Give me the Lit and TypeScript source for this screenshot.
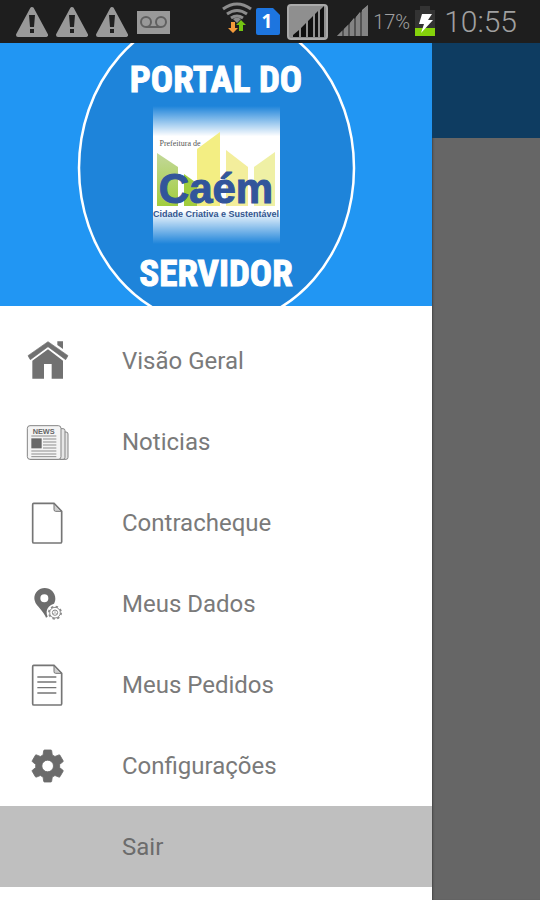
import { LitElement, html, svg, css, type SVGTemplateResult } from "lit";
import { customElement, property } from "lit/decorators.js";
import { classMap } from "lit/directives/class-map.js";

const gear =
  "M19.14 12.94c.04-.3.06-.61.06-.94 0-.32-.02-.64-.07-.94l2.03-1.58a.49.49 0 0 0 .12-.61l-1.92-3.32a.488.488 0 0 0-.59-.22l-2.39.96c-.5-.38-1.03-.7-1.62-.94l-.36-2.54a.484.484 0 0 0-.48-.41h-3.84c-.24 0-.43.17-.47.41l-.36 2.54c-.59.24-1.13.57-1.62.94l-2.39-.96c-.22-.08-.47 0-.59.22L2.74 8.87c-.12.21-.08.47.12.61l2.03 1.58c-.05.3-.09.63-.09.94s.02.64.07.94l-2.03 1.58a.49.49 0 0 0-.12.61l1.92 3.32c.12.22.37.29.59.22l2.39-.96c.5.38 1.03.7 1.62.94l.36 2.54c.05.24.24.41.48.41h3.84c.24 0 .44-.17.47-.41l.36-2.54c.59-.24 1.13-.56 1.62-.94l2.39.96c.22.08.47 0 .59-.22l1.92-3.32c.12-.22.07-.47-.12-.61l-2.01-1.58zM12 15.5a3.5 3.5 0 1 1 0-7 3.5 3.5 0 0 1 0 7z";

const sheet = svg`
  <path d="M29 13H90L113 37V128Q113 132 109 132H30Q26 132 26 128V17Q26 13 29 13Z" fill="#fff" stroke="#757575" stroke-width="5"/>
  <path d="M90 14V32Q90 37 95 37H112Z" fill="#d0d0d0" stroke="#757575" stroke-width="3"/>`;

const icons: Record<string, SVGTemplateResult> = {
  home: svg`<g fill="#717171">
    <path d="M72 14L132 56L125 68L72 29L19 68L12 56Z" stroke="#717171" stroke-width="2" stroke-linejoin="round"/>
    <path d="M100 13H117V36L100 24Z"/>
    <path d="M25 71L72 37L117 71V125H83V81H60V125H25Z"/></g>`,
  news: svg`<g fill="#e6e6e6" stroke="#858585" stroke-width="3">
    <path d="M112 42H126Q132 42 132 48V118Q132 124 126 124H20V42Z"/>
    <path d="M104 32H117Q123 32 123 38V118Q123 124 117 124H20V32Z"/>
    <rect x="10" y="23" width="101" height="101" rx="8" fill="#f4f4f4"/></g>
    <text x="59" y="47" text-anchor="middle" class="news">NEWS</text>
    <rect x="22" y="61" width="31" height="30" fill="#686868"/>
    <path d="M22 54H97M57 63H97M57 72H97M57 81H97M57 90H97M22 99H97M22 108H97M22 116H97" stroke="#8d8d8d" stroke-width="3"/>`,
  sheet,
  place: svg`<path fill-rule="evenodd" fill="#6d6d6d" d="M62 24C80 24 94 38 94 56C94 62 92 67 90 71Q70 78 68 94Q67 104 71 110L66 113Q62 102 44 81Q31 68 31 55C31 38 45 24 62 24ZM61 43A12 12 0 1 0 61 67A12 12 0 1 0 61 43Z"/>
    <circle cx="93" cy="98" r="18" fill="none" stroke="#8a8a8a" stroke-width="6" stroke-dasharray="7 7.1"/>
    <circle cx="93" cy="98" r="16" fill="#fff" stroke="#8a8a8a" stroke-width="3"/>
    <circle cx="93" cy="98" r="8" fill="none" stroke="#8a8a8a" stroke-width="3"/>
    <path d="M93 90V98L86 103M93 98L100 103" stroke="#999" stroke-width="2" fill="none"/>`,
  lines: svg`${sheet}<path d="M40 48H97M40 63H97M40 80H97M40 96H97" stroke="#757575" stroke-width="4"/>`,
  gear: svg`<path transform="translate(11 12) scale(5)" fill="#6b6b6b" stroke="#6b6b6b" stroke-width=".5" d="${gear}"/>`,
};

@customElement("status-bar")
class StatusBar extends LitElement {
  static styles = css`
    :host { display: flex; align-items: center; justify-content: space-between; height: 43px; padding: 0 23px 0 16px; background: #1e1e1e; color: #a0a0a0; font-family: Roboto, sans-serif; font-weight: 300; }
    .group { display: flex; align-items: center; }
    .left { gap: 8px; }
    .right { gap: 4px; }
    svg { display: block; flex: none; }
    .percent { font-size: 20px; }
    .clock { font-size: 30px; margin-left: 4px; }
    .sim { font: bold 19px "Open Sans", sans-serif; fill: #fff; }
  `;

  private warning() {
    return html`<svg width="32" height="43" viewBox="0 0 32 43" aria-hidden="true">
      <path d="M16 9L30 35H2Z" fill="#999" stroke="#999" stroke-width="4" stroke-linejoin="round"/>
      <path d="M13 15H19L18 27H14ZM14 29H18V33H14Z" fill="#202020"/></svg>`;
  }

  render() {
    return html`
      <div class="group left">
        ${[0, 1, 2].map(() => this.warning())}
        <svg width="34" height="43" viewBox="0 0 34 43" aria-hidden="true">
          <rect x="1" y="11" width="33" height="23" fill="#999"/>
          <g fill="none" stroke="#606060" stroke-width="2"><circle cx="10" cy="22" r="5"/><circle cx="25" cy="22" r="5"/><path d="M10 27H25"/></g>
        </svg>
      </div>
      <div class="group right">
        <svg width="30" height="43" viewBox="222 0 30 43" aria-hidden="true">
          <g fill="none" stroke="#8c8c8c" stroke-width="3"><path d="M223 9Q237 -1 251 9M227 14Q237 7 247 14M231 18Q237 14 243 18"/></g>
          <path d="M233 19Q237 16 241 19L237 23Z" fill="#8c8c8c"/>
          <path d="M231 22H235V28H238L233 33L228 28H231Z" fill="#f39a3b"/>
          <path d="M239 31H243V25H246L241 20L236 25H239Z" fill="#74c511"/>
        </svg>
        <svg width="26" height="43" viewBox="255 0 26 43" aria-hidden="true">
          <path d="M257 8H272L279 15V33Q279 35 277 35H257Q255 35 255 33V10Q255 8 257 8Z" fill="#1d75df"/>
          <text x="266" y="28" text-anchor="middle" class="sim">1</text>
        </svg>
        <svg width="43" height="43" viewBox="286 0 43 43" aria-hidden="true">
          <rect x="288" y="5" width="39" height="34" rx="3" fill="#8f8f8f" stroke="#aaa" stroke-width="2"/>
          <path d="M293 37V35L299 30V37ZM301 37V28L306 23V37ZM308 37V21L313 16V37ZM315 37V14L318 11V37ZM320 37V10L324 6V37Z" fill="#101010"/>
        </svg>
        <svg width="36" height="43" viewBox="333 0 36 43" aria-hidden="true">
          <path d="M337 36L342 31V36ZM344 36V29L348 25V36ZM350 36V23L354 18V36ZM356 36V17L360 12V36ZM362 36V10L368 5V36Z" fill="#999"/>
          <path d="M337 36L368 5V36Z" fill="#777" opacity=".6"/>
        </svg>
        <span class="percent">17%</span>
        <svg width="22" height="43" viewBox="412 0 22 43" aria-hidden="true">
          <path d="M418 6H428V10H433V29H413V10H418Z" fill="#333"/>
          <path d="M413 28H433V36H413Z" fill="#85d20b"/>
          <path d="M420 14H430L426 20H431L419 33L422 24H417Z" fill="#fff"/>
        </svg>
        <span class="clock">10:55</span>
      </div>`;
  }
}

@customElement("portal-logo")
class PortalLogo extends LitElement {
  static styles = css`
    :host { display: block; background: #2196f3; overflow: hidden; }
    svg { display: block; width: 100%; height: 263px; }
    text { text-anchor: middle; }
    .title { font: bold 37px "Roboto Condensed", Roboto, sans-serif; fill: #fff; stroke: #fff; }
    .small { font: 8px "Liberation Serif", serif; fill: #555; }
    .name { font: bold 42px "Liberation Sans", sans-serif; fill: #32559b; stroke: #32559b; }
    .motto { font: bold 9px "Liberation Sans", sans-serif; fill: #34568f; }
  `;

  render() {
    return html`<svg viewBox="0 43 432 263" role="img" aria-label="Portal do Servidor, Prefeitura de Caém">
      <defs>
        <linearGradient id="fade" x1="0" y1="0" x2="0" y2="1">
          <stop offset="0" stop-color="#fff" stop-opacity="0"/>
          <stop offset=".22" stop-color="#fff"/>
          <stop offset=".76" stop-color="#fff"/>
          <stop offset="1" stop-color="#fff" stop-opacity="0"/>
        </linearGradient>
        <linearGradient id="green" x1="0" y1="0" x2="0" y2="1">
          <stop offset="0" stop-color="#c3d89a"/><stop offset="1" stop-color="#a2cd3d"/>
        </linearGradient>
      </defs>
      <ellipse cx="216.500" cy="168" rx="137.500" ry="157.500" fill="#1e84da" stroke="#fff" stroke-width="2.500"/>
      <text class="title" x="216" y="92">PORTAL DO</text>
      <rect x="153" y="106" width="127" height="138" fill="url(#fade)"/>
      <path d="M157 153L178 167V206H157Z" fill="url(#green)"/>
      <path d="M184 174L198 184V206H184Z" fill="#a2cd3d"/>
      <path d="M197 149L220 132V206H197Z" fill="#f3ee83"/>
      <path d="M226 150L248 167V206H226Z" fill="#f3ee9c"/>
      <path d="M254 167L275 152V206H254Z" fill="#eff0a5"/>
      <text class="small" x="180" y="146">Prefeitura de</text>
      <text class="name" x="216" y="203">Caém</text>
      <text class="motto" x="216" y="217">Cidade Criativa e Sustentável</text>
      <text class="title" x="216" y="286">SERVIDOR</text>
    </svg>`;
  }
}

@customElement("menu-item")
class MenuItem extends LitElement {
  @property() label = "";
  @property() icon = "";
  @property({ type: Boolean }) active = false;

  static styles = css`
    :host { display: block; }
    .item { display: flex; align-items: center; gap: 50px; height: 81px; padding: 0 24px; box-sizing: border-box; color: #7a7a7a; font: 24px Roboto, sans-serif; text-decoration: none; }
    .active { background: #bfbfbf; color: #6c6c6c; }
    .icon { flex: none; width: 48px; height: 48px; }
    .news { font: bold 22px "Liberation Sans", sans-serif; fill: #666; stroke: none; }
  `;

  render() {
    return html`<a href="#" class=${classMap({ item: true, active: this.active })}>
      <svg class="icon" viewBox="0 0 144 144" aria-hidden="true">${icons[this.icon]}</svg>
      <span>${this.label}</span>
    </a>`;
  }
}

@customElement("app-root")
class AppRoot extends LitElement {
  static styles = css`
    :host { display: flex; flex-direction: column; min-height: 100vh; }
    .body { flex: 1; display: flex; }
    .drawer { width: 80%; background: #fff; }
    .menu { padding-top: 14px; }
    .page { flex: 1; background: #666; box-shadow: inset 2px 0 2px -1px #444; }
    .toolbar { height: 95px; background: #0e3c61; }
  `;

  private items = [
    { label: "Visão Geral", icon: "home" },
    { label: "Noticias", icon: "news" },
    { label: "Contracheque", icon: "sheet" },
    { label: "Meus Dados", icon: "place" },
    { label: "Meus Pedidos", icon: "lines" },
    { label: "Configurações", icon: "gear" },
    { label: "Sair", icon: "", active: true },
  ];

  render() {
    return html`
      <status-bar></status-bar>
      <div class="body">
        <aside class="drawer">
          <portal-logo></portal-logo>
          <nav class="menu">
            ${this.items.map((i) => html`<menu-item .label=${i.label} .icon=${i.icon} .active=${!!i.active}></menu-item>`)}
          </nav>
        </aside>
        <main class="page"><header class="toolbar"></header></main>
      </div>`;
  }
}
